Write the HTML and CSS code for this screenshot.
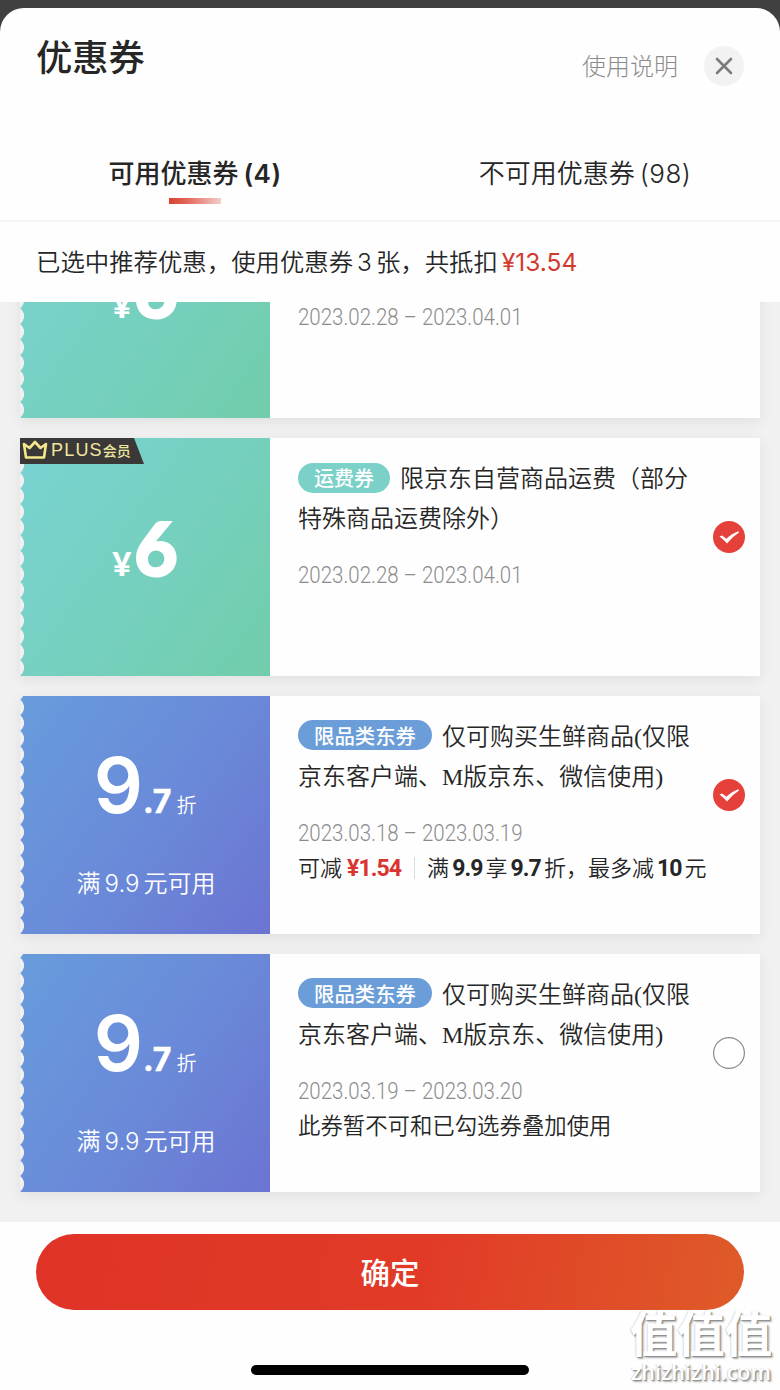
FILE: index.html
```html
<!DOCTYPE html>
<html lang="zh-CN">
<head>
    <meta charset="UTF-8">
    <meta name="viewport" content="width=device-width, initial-scale=1.0">
    <title>优惠券</title>
    <link rel="stylesheet" href="styles.css">
</head>
<body>

    <div class="sheet">
        <div class="header">
            <h1 class="header-title">优惠券</h1>
            <a class="help">使用说明</a>
            <button class="close" aria-label="关闭">
                <svg width="40" height="40" viewBox="0 0 40 40">
                    <path d="M13 13L27 27M27 13L13 27" stroke="#7b7b7b" stroke-width="2.6" stroke-linecap="round"/>
                </svg>
            </button>
        </div>

        <div class="tabs">
            <div class="tab active">可用优惠券<span class="count">(4)</span></div>
            <div class="tab">不可用优惠券<span class="count">(98)</span></div>
        </div>

        <div class="notice">已选中推荐优惠，使用优惠券<span class="num">3</span>张，共抵扣<span class="price">¥13.54</span></div>

        <div class="list">
            <div class="coupon freight">
                <div class="value">
                    <div class="amount"><span class="yen">¥</span><span class="six">6</span></div>
                </div>
                <div class="info">
                    <div class="name"><span class="tag">运费券</span>限京东自营商品运费（部分<br>特殊商品运费除外）</div>
                    <div class="date">2023.02.28 – 2023.04.01</div>
                </div>
            </div>

            <div class="coupon freight">
                <div class="value">
                    <div class="plus">
                        <svg width="26" height="20" viewBox="0 0 26 20">
                            <path d="M2 4L7.5 8L13 2L18.5 8L24 4L22 17.5H4Z" fill="none" stroke="#f3e98a" stroke-width="2.6" stroke-linejoin="round"/>
                        </svg>
                        <span class="plus-text">PLUS</span><span class="plus-member">会员</span>
                    </div>
                    <div class="amount"><span class="yen">¥</span><span class="six">6</span></div>
                </div>
                <div class="info">
                    <div class="name"><span class="tag">运费券</span>限京东自营商品运费（部分<br>特殊商品运费除外）</div>
                    <div class="date">2023.02.28 – 2023.04.01</div>
                </div>
                <svg class="check" width="32" height="32" viewBox="0 0 32 32">
                    <circle cx="16" cy="16" r="16" fill="#e5413a"/>
                    <path d="M6.5 15.5L9 14.5L13.5 17.8Q18 13 25.5 10.2L26 11.5Q19.500 15.5 14 22.5Q10.500 18.5 6.5 15.5Z" fill="#fff"/>
                </svg>
            </div>

            <div class="coupon category">
                <div class="value">
                    <div class="amount"><span class="nine">9</span><span class="decimal">.7</span><span class="unit">折</span></div>
                    <div class="limit">满<span class="num">9.9</span>元可用</div>
                </div>
                <div class="info">
                    <div class="name"><span class="tag">限品类东券</span>仅可购买生鲜商品(仅限<br>京东客户端、M版京东、微信使用)</div>
                    <div class="date">2023.03.18 – 2023.03.19</div>
                    <div class="desc">可减<b class="cut">¥1.54</b><i class="bar"></i>满<b>9.9</b>享<b>9.7</b>折，最多减<b>10</b>元</div>
                </div>
                <svg class="check" width="32" height="32" viewBox="0 0 32 32">
                    <circle cx="16" cy="16" r="16" fill="#e5413a"/>
                    <path d="M6.5 15.5L9 14.5L13.5 17.8Q18 13 25.5 10.2L26 11.5Q19.500 15.5 14 22.5Q10.500 18.5 6.5 15.5Z" fill="#fff"/>
                </svg>
            </div>

            <div class="coupon category">
                <div class="value">
                    <div class="amount"><span class="nine">9</span><span class="decimal">.7</span><span class="unit">折</span></div>
                    <div class="limit">满<span class="num">9.9</span>元可用</div>
                </div>
                <div class="info">
                    <div class="name"><span class="tag">限品类东券</span>仅可购买生鲜商品(仅限<br>京东客户端、M版京东、微信使用)</div>
                    <div class="date">2023.03.19 – 2023.03.20</div>
                    <div class="desc tight">此券暂不可和已勾选券叠加使用</div>
                </div>
                <svg class="check" width="32" height="32" viewBox="0 0 32 32">
                    <circle cx="16" cy="16" r="15.4" fill="#fff" stroke="#8a8a8a" stroke-width="1.2"/>
                </svg>
            </div>
        </div>

        <div class="footer">
            <button class="confirm">确定</button>
            <div class="home-bar"></div>
        </div>
    </div>

    <div class="watermark">
        <div class="mark">值值值</div>
        <div class="site">zhizhizhi.com</div>
    </div>

</body>
</html>
```
FILE: styles.css
```css
* {
    box-sizing: border-box;
}

body {
    margin: 0;
    height: 1390px;
    padding-top: 8px;
    background-color: #404040;
    font-family: "Noto Sans CJK SC", sans-serif;
    font-weight: 350;
    color: #262626;
    overflow: hidden;
}

button {
    border: 0;
    padding: 0;
    font-family: inherit;
}

.sheet {
    display: flex;
    flex-direction: column;
    height: 1382px;
    background-color: #fefefe;
    border-radius: 24px 24px 0 0;
    overflow: hidden;
}

/* header */
.header {
    display: flex;
    align-items: center;
    height: 116px;
    padding: 0 36px;
}

.header-title {
    flex: 1;
    margin: 0 0 22px;
    font-size: 36.3px;
    font-weight: 500;
    line-height: 52px;
}

.help {
    margin-bottom: 4px;
    font-size: 24px;
    font-weight: 300;
    color: #8c8c8c;
}

.close {
    width: 40px;
    height: 40px;
    margin-left: 26px;
    border-radius: 50%;
    background-color: #f2f2f2;
}

.tabs {
    display: flex;
    height: 98px;
    border-bottom: 2px solid #f6f6f6;
}

.tab {
    flex: 1;
    padding-top: 28px;
    text-align: center;
    font-size: 26px;
    line-height: 40px;
}

.tab.active {
    font-weight: 500;
}

.tab.active::after {
    content: "";
    display: block;
    width: 52px;
    height: 6px;
    margin: 4px auto 0;
    background: linear-gradient(90deg, #d5432f, #e2685a 35%, #f2cfca);
}

.count {
    margin-left: 5px;
    font-family: Inter, sans-serif;
    letter-spacing: 0.5px;
}

.tab.active .count {
    font-weight: 600;
}

.notice {
    height: 80px;
    padding-left: 36px;
    font-size: 24.4px;
    line-height: 78px;
    white-space: nowrap;
}

.num {
    margin: 0 4px;
    font-family: Inter, sans-serif;
}

.price {
    margin-left: 4px;
    font-family: Inter, sans-serif;
    font-weight: 400;
    font-size: 24.5px;
    color: #d13b2e;
}

/* coupons, scrolled to the end */
.list {
    display: flex;
    flex-direction: column;
    justify-content: flex-end;
    gap: 20px;
    height: 920px;
    padding: 0 20px 30px;
    background-color: #f1f1f1;
    overflow: hidden;
}

.coupon {
    display: flex;
    flex-shrink: 0;
    align-items: center;
    height: 238px;
    padding-right: 15px;
    background-color: #fefefe;
    box-shadow: 0 4px 14px rgba(0, 0, 0, 0.07);
}

.value {
    position: relative;
    flex-shrink: 0;
    width: 250px;
    height: 238px;
    color: #fff;
}

.value::before {
    content: "";
    position: absolute;
    left: 0;
    top: 0;
    width: 6px;
    height: 100%;
    background: radial-gradient(circle at -5.6px 50%, #f0f0f0 9.3px, transparent 9.9px) 0 -12px / 6px 15.6px repeat-y;
}

.freight .value {
    padding-top: 69px;
    background: linear-gradient(125deg, #78d3d3, #76d0bf 50%, #71cdab);
}

.category .value {
    padding-top: 49px;
    background: linear-gradient(125deg, #679cdc, #6a8bd9 50%, #6b74d2);
}

.amount {
    display: flex;
    align-items: baseline;
    justify-content: center;
    height: 80px;
    line-height: 80px;
}

.yen {
    margin-top: -2px;
    font-family: Lato, sans-serif;
    font-size: 33px;
    font-weight: 900;
}

.six {
    margin-left: 3px;
    font-family: Lato, sans-serif;
    font-size: 75px;
    font-weight: 900;
    -webkit-text-stroke: 2px #fff;
}

.nine {
    font-family: Inter, sans-serif;
    font-size: 77px;
    font-weight: 600;
}

.decimal {
    font-family: Inter, sans-serif;
    font-size: 32px;
    font-weight: 700;
    -webkit-text-stroke: 0.6px #fff;
}

.unit {
    margin-left: 5px;
    font-size: 20px;
}

.limit {
    margin-top: 37px;
    padding-left: 2px;
    text-align: center;
    font-size: 24px;
    line-height: 40px;
}

.plus {
    position: absolute;
    left: 0;
    top: 0;
    display: flex;
    align-items: center;
    width: 124px;
    height: 26px;
    padding: 0 0 2px 2px;
    background-color: #3b3938;
    clip-path: polygon(0 0, 114px 0, 124px 26px, 0 26px);
    color: #f0e6a0;
}

.plus-text {
    margin-left: 3px;
    font-family: "Liberation Sans", sans-serif;
    font-size: 18px;
    letter-spacing: 1.2px;
}

.plus-member {
    font-size: 14px;
    font-weight: 500;
}

.info {
    flex: 1;
    align-self: flex-start;
    padding: 21px 0 0 28px;
    white-space: nowrap;
}

.name {
    font-family: "Liberation Serif", "Noto Sans CJK SC", sans-serif;
    font-size: 24px;
    line-height: 40px;
}

.tag {
    display: inline-block;
    height: 30px;
    margin-right: 10px;
    padding: 0 16px;
    border-radius: 15px;
    font-family: "Noto Sans CJK SC", sans-serif;
    font-size: 20px;
    font-weight: 500;
    line-height: 30px;
    vertical-align: 1px;
    color: #fff;
}

.freight .tag {
    background-color: #7bd0c8;
}

.category .tag {
    padding: 0 16px;
    font-size: 20.4px;
    background-color: #6b9dd8;
}

.date {
    margin-top: 19px;
    font-family: Roboto, sans-serif;
    font-size: 23px;
    line-height: 36px;
    color: #8c8c8c;
    transform: scaleX(0.89);
    transform-origin: left;
}

.desc {
    display: flex;
    align-items: baseline;
    margin-top: -4px;
    font-size: 22px;
    line-height: 36px;
}

.desc.tight {
    font-size: 22.4px;
}

.desc b {
    margin: 0 3px;
    font-family: Roboto, sans-serif;
    font-size: 23px;
    font-weight: 700;
    letter-spacing: -0.9px;
}

.desc .cut {
    margin-left: 5px;
    color: #d9342f;
}

.bar {
    align-self: center;
    width: 1px;
    height: 22px;
    margin: 0 12px 0 10px;
    background-color: #ddd;
}

.check {
    margin-top: -41px;
}

/* footer */
.footer {
    height: 168px;
    padding: 12px 36px 0;
}

.confirm {
    display: block;
    width: 100%;
    height: 76px;
    padding-bottom: 2px;
    border-radius: 38px;
    background: linear-gradient(100deg, #df3327, #e13b27 55%, #df5b29);
    color: #fff;
    font-size: 29.5px;
    font-weight: 500;
}

.home-bar {
    width: 278px;
    height: 10px;
    margin: 55px auto 0;
    border-radius: 5px;
    background-color: #000;
}

.watermark {
    position: absolute;
    left: 629px;
    top: 1304px;
    width: 144px;
    color: #fff;
    text-shadow: 1px 1px 1px #8c8c8c, 2px 2px 2px #b5b5b5, -1px 0 1px #ddd;
    text-align: center;
    white-space: nowrap;
}

.mark {
    font-size: 47.5px;
    font-weight: 700;
    line-height: 56px;
}

.site {
    font-family: "Open Sans", sans-serif;
    font-size: 21.5px;
    font-weight: 600;
    line-height: 24px;
}
```
